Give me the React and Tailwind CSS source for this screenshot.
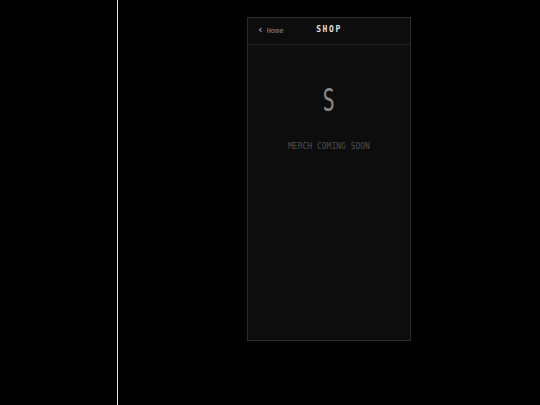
import React from 'react';

const mono = "font-['DejaVu_Sans_Mono','Liberation_Mono',monospace]";

export default function App() {
  return (
    <div className={`flex h-[405px] w-[540px] bg-black ${mono}`}>
      {/* left rail */}
      <div className="w-[118px] flex-shrink-0 border-r border-[#e5e5e5]" />

      <div className="flex flex-1 justify-center pt-[17px]">
        <div className="flex h-[324px] w-[164px] flex-col border border-[#2b2b2b] bg-[#0d0d0d]">
          {/* header */}
          <div className="relative flex h-[27px] items-center border-b border-[#222] px-[9px]">
            <div className="flex items-center gap-[3px] text-[#8c8c8c]">
              <span className="-translate-y-[2px] text-[11px] leading-none text-[#bdbdbd]">‹</span>
              <span className="text-[7px] leading-none">Home</span>
            </div>
            <div className="absolute inset-0 flex items-center justify-center pb-[2px]">
              <span className="text-[8px] font-bold tracking-[1.6px] text-[#e0e0e0]">SHOP</span>
            </div>
          </div>

          {/* empty state */}
          <div className="flex flex-col items-center pt-[38px]">
            <span className="inline-block h-[34px] scale-x-[0.62] text-[32px] leading-[34px] text-[#8a8a8a]">S</span>
            <span className="mt-[26px] text-[8px] leading-none text-[#4e4e4e]">MERCH COMING SOON</span>
          </div>
        </div>
      </div>
    </div>
  );
}
